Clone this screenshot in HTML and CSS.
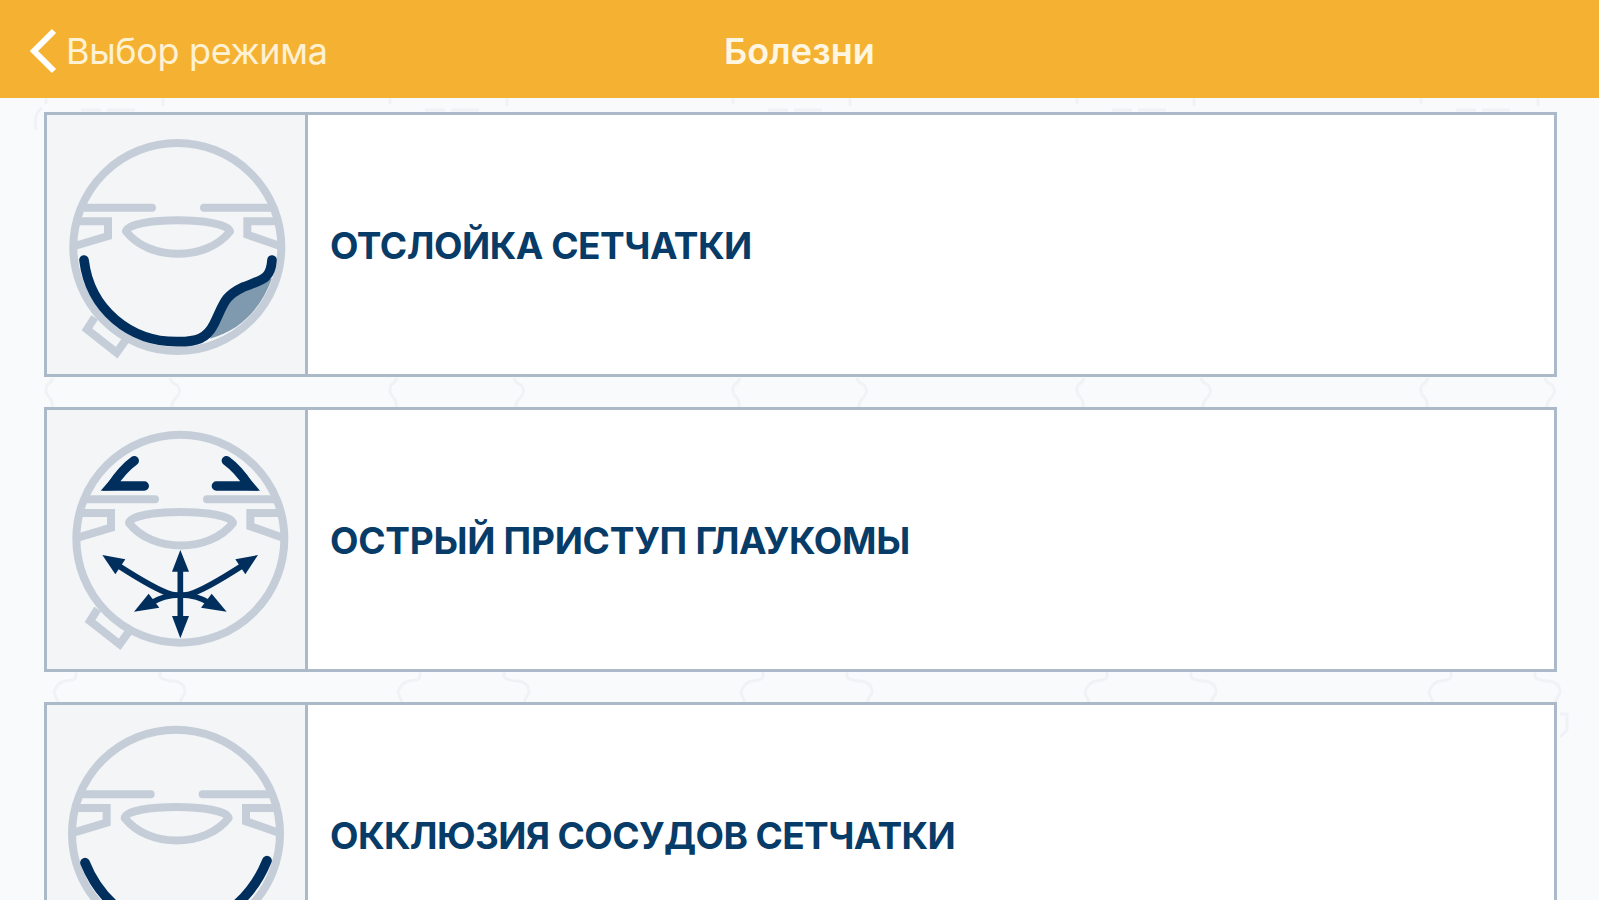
FILE: index.html
```html
<!DOCTYPE html>
<html lang="ru">
<head>
    <meta charset="UTF-8">
    <meta name="viewport" content="width=device-width, initial-scale=1.0">
    <title>Болезни</title>
    <link rel="stylesheet" href="styles.css">
</head>
<body>
    <!-- Background pattern -->
    <svg class="page-pattern" width="1599" height="900">
        <defs>
            <g id="motif" fill="none" stroke="#f0f2f5" stroke-width="3">
                <path d="M46 98v6M163 98v8M81 110h20M107 110h28" />
                <path d="M53 378q-2 5-6 7q-3 7 2 12q4 4 3 10M170 378q1 5 7 7q5 6 0 12q-5 4-5 10" />
                <path d="M76 672v5q-2 4-12 4q-8 3-10 12l4 9M160 672v5q4 4 14 4q11 1 11 12q-3 4-5 9" />
            </g>
        </defs>
        <use href="#motif" />
        <use href="#motif" x="344" />
        <use href="#motif" x="687" />
        <use href="#motif" x="1031" />
        <use href="#motif" x="1375" />
        <path d="M42 108q-9 6-6 22" fill="none" stroke="#f0f2f5" stroke-width="3" />
        <path d="M1560 714h7v16l-7 7" fill="none" stroke="#f0f2f5" stroke-width="3" />
    </svg>

    <header>
        <a class="back" href="#">
            <svg width="30" height="48" viewBox="0 0 30 48">
                <path d="M26 4L6 24L26 44" fill="none" stroke="#fff" stroke-width="6" />
            </svg>
            <span>Выбор режима</span>
        </a>
        <h1>Болезни</h1>
    </header>

    <!-- Eye outline shared by all icons -->
    <svg class="hidden" width="0" height="0">
        <defs>
            <g id="eye" fill="none" stroke="#c5ced8" stroke-width="24">
                <path d="M194 652L171 688L260 758L290 716" />
                <circle cx="442" cy="441" r="312" />
                <path d="M160 323H366M522 323H726" stroke-linecap="round" />
                <path d="M142 364H234V408L134 438M742 364H652V404L750 438" />
                <path d="M288 394C294 350 590 350 600 394C530 484 358 484 288 394Z" stroke-linejoin="round" />
            </g>
        </defs>
    </svg>

    <main class="disease-list">
        <a class="disease-card" href="#">
            <div class="disease-icon">
                <svg viewBox="51 45 774 777">
                    <use href="#eye" />
                    <path d="M726 535C694 622 636 690 540 716L585 620L625 574Z" fill="#7f99ae" />
                    <path d="M162 480C180 630 302 725 440 725C500 726 530 716 552 672C582 612 580 590 638 562C698 538 722 538 726 480" fill="none" stroke="#002f5d" stroke-width="29" stroke-linecap="round" />
                </svg>
            </div>
            <h2 class="retina">ОТСЛОЙКА СЕТЧАТКИ</h2>
        </a>

        <a class="disease-card" href="#">
            <div class="disease-icon">
                <svg viewBox="51 45 774 777">
                    <use href="#eye" x="9" y="-10" />
                    <g fill="none" stroke="#002f5d" stroke-width="28" stroke-linecap="round">
                        <path d="M313 197Q278 222 244 273H343" />
                        <path d="M589 197Q624 222 658 273H559" />
                    </g>
                    <g fill="none" stroke="#002f5d" stroke-width="17">
                        <path d="M262 510Q380 586 424 598Q451 604 478 598Q522 586 640 510" />
                        <path d="M360 626Q400 600 451 600Q502 600 542 626M451 515V680" />
                    </g>
                    <g fill="#002f5d">
                        <path d="M212 287L246 248L275 284Z" />
                        <path d="M690 287L656 248L627 284Z" />
                        <path d="M451 465L477 530H426Z" />
                        <path d="M451 730L477 663H426Z" />
                        <path d="M217 480L286 493L256 538Z" />
                        <path d="M684 480L616 493L646 538Z" />
                        <path d="M312 650L356 596L388 638Z" />
                        <path d="M590 650L545 596L513 638Z" />
                    </g>
                </svg>
            </div>
            <h2 class="glaucoma">ОСТРЫЙ ПРИСТУП ГЛАУКОМЫ</h2>
        </a>

        <a class="disease-card" href="#">
            <div class="disease-icon">
                <svg viewBox="51 45 774 777">
                    <use href="#eye" x="-4" y="-10" />
                    <path d="M165 518C270 780 602 780 711 512" fill="none" stroke="#002f5d" stroke-width="29" stroke-linecap="round" />
                </svg>
            </div>
            <h2 class="occlusion">ОККЛЮЗИЯ СОСУДОВ СЕТЧАТКИ</h2>
        </a>
    </main>
</body>
</html>
```
FILE: styles.css
```css
/* Global Styles */
body {
    font-family: Inter, 'Liberation Sans', sans-serif;
    margin: 0;
    padding: 0;
    height: 900px;
    background-color: #f8fafc;
    overflow: hidden;
}

.page-pattern {
    position: absolute;
    top: 0;
    left: 0;
    z-index: -1;
}

.hidden {
    display: block;
}

header {
    box-sizing: border-box;
    height: 98px;
    padding: 3px 28px 0;
    background-color: #f5b232;
    display: grid;
    grid-template-columns: 1fr auto 1fr;
    align-items: center;
}

.back {
    display: flex;
    align-items: center;
    gap: 8px;
    color: #fff1d3;
    font-size: 36px;
    letter-spacing: -0.35px;
    text-decoration: none;
    white-space: nowrap;
}

header h1 {
    margin: 0;
    font-size: 36px;
    font-weight: 600;
    letter-spacing: 0.1px;
    color: #fff6e2;
}

/* Disease list */
.disease-list {
    box-sizing: border-box;
    height: 802px;
    display: flex;
    flex-direction: column;
    gap: 30px;
    padding: 14px 42px 0 44px;
    overflow: hidden;
}

.disease-card {
    box-sizing: border-box;
    height: 265px;
    flex-shrink: 0;
    display: flex;
    align-items: center;
    background-color: #fff;
    border: 3px solid #abb9c9;
    text-decoration: none;
}

.disease-icon {
    width: 258px;
    height: 259px;
    background-color: #f3f5f7;
    border-right: 3px solid #abb9c9;
}

    .disease-icon svg {
        display: block;
        width: 258px;
        height: 259px;
    }

.disease-card h2 {
    margin: 2px 0 0 22px;
    font-size: 37px;
    font-weight: 700;
    color: #073b68;
    white-space: nowrap;
}

.disease-card .retina {
    letter-spacing: -0.5px;
}

.disease-card .glaucoma {
    letter-spacing: -0.27px;
}

.disease-card .occlusion {
    letter-spacing: -0.62px;
}
```
